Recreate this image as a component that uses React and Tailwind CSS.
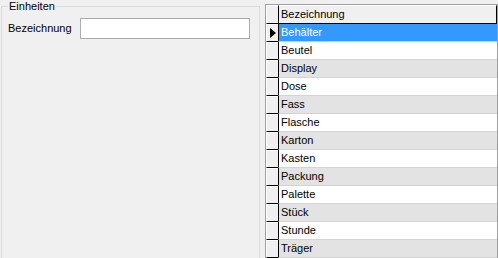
const rows = [
  'Behälter', 'Beutel', 'Display', 'Dose', 'Fass', 'Flasche', 'Karton',
  'Kasten', 'Packung', 'Palette', 'Stück', 'Stunde', 'Träger',
];

function IndicatorCell({ active }) {
  return (
    <div className="flex h-[18px] w-[12px] shrink-0 items-center justify-center border-l border-t border-b border-l-white border-t-white border-b-black bg-[#f0f0f0]">
      {active && (
        <svg width="6" height="10" viewBox="0 0 6 10">
          <path d="M0 0 L6 5 L0 10 Z" fill="#000" />
        </svg>
      )}
    </div>
  );
}

export default function App() {
  return (
    <div
      className="flex h-[258px] w-[498px] overflow-hidden bg-[#f0f0f0] text-[11px] leading-[13px] text-black"
      style={{ fontFamily: '"Liberation Sans", Arial, sans-serif' }}
    >
      {/* Gruppenrahmen links */}
      <fieldset className="ml-[1px] h-[270px] w-[259px] shrink-0 border border-[#dcdcdc] px-[6px]">
        <legend className="ml-[0px] px-[1px] text-[11px]">Einheiten</legend>
        <div className="mt-[5px] flex items-center">
          <span className="w-[72px]">Bezeichnung</span>
          <div className="h-[21px] w-[170px] border border-[#adadad] bg-white" />
        </div>
      </fieldset>

      {/* Tabelle rechts */}
      <div className="ml-[5px] mt-[4px] flex w-[233px] shrink-0 flex-col border-l border-r border-t border-[#a0a0a0]">
        <div className="flex h-[19px]">
          <div className="h-[19px] w-[12px] shrink-0 border-l border-t border-b border-l-white border-t-white border-b-black bg-[#f0f0f0]" />
          <div className="flex h-[19px] flex-1 items-center border-l border-t border-b border-r border-l-black border-t-white border-b-black border-r-black bg-[#f0f0f0] pl-[2px]">
            Bezeichnung
          </div>
        </div>
        {rows.map((name, i) => {
          const bg = i === 0 ? 'bg-[#3399ff] text-white' : i % 2 === 1 ? 'bg-white' : 'bg-[#e3e3e3]';
          return (
            <div key={name} className="flex h-[18px]">
              <IndicatorCell active={i === 0} />
              <div className={`flex h-[18px] flex-1 items-center border-l border-b border-l-black border-b-[#d4d4d4] pl-[2px] ${bg}`}>
                {name}
              </div>
            </div>
          );
        })}
      </div>
    </div>
  );
}
